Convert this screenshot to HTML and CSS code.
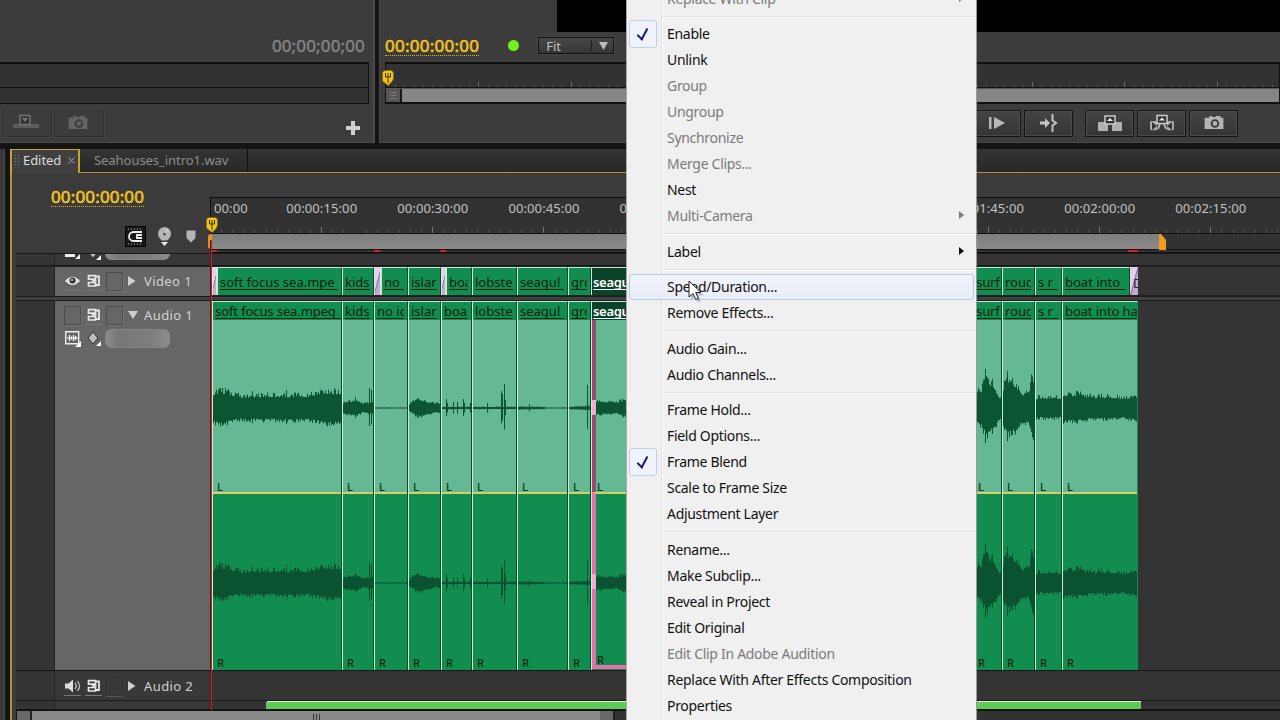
FILE: index.html
```html
<!DOCTYPE html>
<html lang="en">
<head>
<meta charset="utf-8">
<title>Edited</title>
<link rel="stylesheet" href="styles.css">
</head>
<body>
<svg class="defs">
  <symbol id="sync" viewBox="0 0 14 14"><path d="M1.500 1.700h7v3.500h-7zM1.500 8.500h7v3.500h-7z" fill="none" stroke="#e6e6e6" stroke-width="1.700"/><path d="M8.500 2.500h3.500v8.500h-3.500M5 6.900h4.500" fill="none" stroke="#e6e6e6" stroke-width="1.800"/></symbol>
  <symbol id="camera" viewBox="0 0 20 16"><path d="M0 3h5V1h3v1h4V1h5v2h3v12H0z" fill="currentColor"/><circle cx="11" cy="9" r="3.6" fill="none" stroke="#3a3a3a" stroke-width="2"/></symbol>
  <symbol id="head" viewBox="0 0 12 16"><path d="M.5 3.500Q.5.5 3.500.5h5q3 0 3 3V8Q11.500 11 6 15.500L.5 11z" fill="#f0c419" stroke="#8a6c08" stroke-width=".6"/><path d="M3.500 3v4M6 3v10M8.500 3v4M3.500 7h5" stroke="#3c3004" fill="none"/></symbol>
  <symbol id="key" viewBox="0 0 18 16"><path d="M7 1l5 6-5 6-5-6z" fill="#bbb" stroke="#333"/><path d="M15 10v5h-5z" fill="#fff"/></symbol>
</svg>
<div class="app">
  <section class="monitors">
    <div class="source">
      <div class="source-time"><span class="tc dim">00;00;00;00</span></div>
      <div class="well"></div><div class="well low"></div>
      <div class="source-tools">
        <span class="flat-btn"><svg width="26" height="16" viewBox="0 0 26 16"><path d="M0 10h26v4H0z" fill="#5c5c5c"/><rect x="7" y="1.500" width="10" height="9" fill="#333" stroke="#737373" stroke-width="1.500"/><path d="M9 4h6l-3 4z" fill="#777"/></svg></span>
        <span class="flat-btn"><svg width="20" height="15" class="cam-dim"><use href="#camera"/></svg></span>
        <svg class="plus" width="14" height="14"><path d="M5 0h4v5h5v4H9v5H5V9H0V5h5z" fill="#d0d0d0"/></svg>
      </div>
    </div>
    <div class="program">
      <div class="video"></div>
      <div class="program-time">
        <span class="tc gold">00:00:00:00</span><i class="dot"></i>
        <span class="select">Fit<b></b><svg width="9" height="8"><path d="M0 0h9L4.500 8z" fill="#bbb"/></svg></span>
      </div>
      <div class="p-ruler"><svg class="p-head" width="12" height="16"><use href="#head"/></svg></div>
      <div class="p-bar"><i></i></div>
      <div class="p-tools">
        <span class="btn"><svg width="18" height="14"><path d="M1 1h2.500v12H1zM6 1l11 6-11 6z" fill="#b8b8b8"/></svg></span>
        <span class="btn"><svg width="18" height="18"><path d="M0 7.500h5V4l5 5-5 5v-3.500H0z" fill="#c4c4c4"/><path d="M12.500 0v6.500L16 9l-3.500 2.500V18" fill="none" stroke="#c4c4c4" stroke-width="2"/></svg></span>
        <span class="btn first"><svg width="24" height="18"><path d="M0 8h10v9H0zM14 8h10v9H14z" fill="#b0b0b0"/><path d="M7 2h10v8H7z" fill="#333" stroke="#ccc" stroke-width="1.500"/><path d="M9 7h6l-3-3z" fill="#eee"/></svg></span>
        <span class="btn"><svg width="24" height="18"><path d="M.7 7.700h6v8h-6zM17.300 7.700h6v8h-6z" fill="#b0b0b0" stroke="#b0b0b0"/><path d="M2 8l5 4-5 4zM22 8l-5 4 5 4z" fill="#333"/><path d="M8 15l2-5M16 15l-2-5" stroke="#ccc" stroke-width="1.500"/><path d="M7 1.500h10v8H7z" fill="#333" stroke="#ccc" stroke-width="1.500"/><path d="M9 6.500h6l-3-3z" fill="#eee"/></svg></span>
        <span class="btn"><svg width="20" height="15" class="cam"><use href="#camera"/></svg></span>
      </div>
    </div>
  </section>
  <section class="timeline">
    <div class="rail"></div>
    <div class="panel">
      <div class="tabs">
        <div class="tab active"><i class="grip"></i>Edited<svg width="7" height="7"><path d="M.5.5l6 6M6.500.5l-6 6" stroke="#aaa"/></svg></div>
        <div class="tab">Seahouses_intro1.wav</div>
      </div>
      <div class="body">
        <div class="top">
          <div class="controls">
            <span class="tc gold">00:00:00:00</span>
            <div class="toggles">
              <span class="magnet"><svg width="19" height="19"><path d="M16 5H7.500a4.500 4.500 0 0 0 0 9H16M16 8h-5v3h5" fill="none" stroke="#eee" stroke-width="1.800"/><path d="M2 2h14M2 17h13" stroke="#bbb" stroke-dasharray="1 2"/></svg></span>
              <svg width="15" height="20"><path d="M1 6.500a6.500 6.500 0 0 1 13 0q0 4-4 7H5q-4-3-4-7z" fill="#b5b5b5"/><circle cx="7.500" cy="7" r="1.500" fill="#555"/><path d="M8 6l3-4" stroke="#eee"/><path d="M4 15h7l-3.500 4z" fill="#eee"/></svg>
              <svg width="10" height="13"><path d="M.5.500h9V8L5 12.500.500 8z" fill="#b5b5b5"/></svg>
            </div>
          </div>
          <div class="ruler">
            <div class="times" id="times"></div>
            <div class="range"><i></i><b></b><svg width="7" height="16"><path d="M0 0h2l5 6v10H0z" fill="#f29b1d"/></svg></div>
            <div class="render"><i></i><i></i><i></i><i></i></div>
            <svg class="t-head" width="12" height="16"><use href="#head"/></svg>
          </div>
        </div>
        <div class="tracks">
          <div class="track peek"><div class="gutter"></div><div class="head"><svg width="16" height="16"><path d="M0 8h10v4H0zM15 9v5h-5z" fill="#eee"/></svg><svg width="18" height="16"><use href="#key"/></svg><i class="knob"></i></div><div class="lane"></div></div>
          <div class="track video-track"><div class="gutter"></div><div class="head"><div class="row">
            <span class="cell"><svg width="15" height="10"><path d="M.5 5Q7.500-2.500 14.500 5 7.500 12 .5 5z" fill="#ddd" stroke="#eee"/><circle cx="7.500" cy="4.500" r="3" fill="#333"/><circle cx="7" cy="4" r="1" fill="#eee"/></svg></span>
            <span class="cell"><svg width="14" height="14"><use href="#sync"/></svg></span><span class="cell box"></span>
            <svg class="tri" width="8" height="10"><path d="M0 0l7.500 5L0 10z" fill="#d0d0d0"/></svg><span>Video 1</span></div></div>
            <div class="lane clips" id="video"></div></div>
          <div class="divider"></div>
          <div class="track audio-track"><div class="gutter"></div><div class="head"><div class="row">
            <span class="cell box"></span><span class="cell"><svg width="14" height="14"><use href="#sync"/></svg></span><span class="cell box"></span>
            <svg class="tri" width="10" height="8"><path d="M0 0h10L5 8z" fill="#d0d0d0"/></svg><span>Audio 1</span></div>
            <div class="row second"><svg width="16" height="16"><path d="M.7.700h13v12H.7z" fill="none" stroke="#eee" stroke-width="1.400"/><path d="M2 7h11M4.500 4v6M6.500 5.500v3M8.500 4v6M10.500 5v4" stroke="#fff" stroke-width="1.200"/><path d="M16 10v6h-6z" fill="#fff"/></svg><svg width="18" height="16"><use href="#key"/></svg><i class="knob"></i></div></div>
            <div class="lane clips" id="audio"></div></div>
          <div class="track small"><div class="gutter"></div><div class="head"><div class="row">
            <span class="cell"><svg width="16" height="14"><path d="M0 4.500h3.500L8 .5v13L3.500 9.500H0z" fill="#ddd"/><path d="M10 4q2.500 3 0 6M12.500 2q4 5 0 10" fill="none" stroke="#ccc" stroke-width="1.200"/></svg></span>
            <span class="cell"><svg width="14" height="14"><use href="#sync"/></svg></span><span class="cell box"></span>
            <svg class="tri" width="8" height="10"><path d="M0 0l7.500 5L0 10z" fill="#d0d0d0"/></svg><span>Audio 2</span></div></div><div class="lane"></div></div>
          <div class="track last"><div class="gutter"></div><div class="head"></div><div class="lane"><i class="green"></i></div></div>
          <div class="playline"></div>
        </div>
        <div class="scroll"><i class="cap"></i><i class="thumb"></i><i class="cap"></i></div>
      </div>
    </div>
  </section>

  <nav class="menu">
    <div class="item off">Replace With Clip<i class="arrow"></i></div><hr>
    <div class="item checked">Enable</div>
    <div class="item">Unlink</div>
    <div class="item off">Group</div>
    <div class="item off">Ungroup</div>
    <div class="item off">Synchronize</div>
    <div class="item off">Merge Clips...</div>
    <div class="item">Nest</div>
    <div class="item off">Multi-Camera<i class="arrow"></i></div><hr>
    <div class="item">Label<i class="arrow"></i></div><hr>
    <div class="item hover">Speed/Duration...</div>
    <div class="item">Remove Effects...</div><hr>
    <div class="item">Audio Gain...</div>
    <div class="item">Audio Channels...</div><hr>
    <div class="item">Frame Hold...</div>
    <div class="item">Field Options...</div>
    <div class="item checked">Frame Blend</div>
    <div class="item">Scale to Frame Size</div>
    <div class="item">Adjustment Layer</div><hr>
    <div class="item">Rename...</div>
    <div class="item">Make Subclip...</div>
    <div class="item">Reveal in Project</div>
    <div class="item">Edit Original</div>
    <div class="item off">Edit Clip In Adobe Audition</div>
    <div class="item">Replace With After Effects Composition</div>
    <div class="item">Properties</div>
  </nav>
  <svg class="cursor" width="20" height="24"><path d="M3 3v17l4-3.500 3 6 3-1.500-2.500-5.500h5.500z" fill="#0003"/><path d="M1 1v16l4-3.500 2.700 6 2.600-1.200-2.600-5.800H13z" fill="#fff" stroke="#222"/></svg>
</div>
<script src="main.js"></script>
</body>
</html>
```
FILE: styles.css
```css
* { box-sizing: border-box; }
body { margin: 0; background: #111; overflow: hidden; font-family: "Noto Sans", sans-serif; }
.defs { position: absolute; width: 0; height: 0; }
.app { position: relative; width: 1280px; height: 720px; overflow: hidden; display: flex; flex-direction: column; background: #141414; }
svg { display: block; flex: none; }

.monitors { display: flex; gap: 4px; height: 143px; flex: none; }
.source { width: 375px; background: #3c3c3c; border-right: 2px solid #4a4a4a; border-bottom: 1px solid #4a4a4a; display: flex; flex-direction: column; }
.source-time { height: 62px; padding: 33px 8px 0 0; display: flex; justify-content: flex-end; }
.tc { font-size: 17px; line-height: 26px; height: 23px; letter-spacing: 0.15px; white-space: nowrap; -webkit-text-stroke: 0.6px; }
.tc.dim { color: #858585; -webkit-text-stroke: 0.4px; }
.tc.gold { color: #f2c321; border-bottom: 1px dotted #d9ae24; }
.well { width: 369px; height: 26px; background: #323232; border: 1px solid #111; border-left: 0; border-top-width: 2px; }
.well.low { height: 16px; border-top: 0; }
.source-tools { display: flex; padding-top: 6px; height: 38px; }
.flat-btn { width: 50px; height: 27px; margin-left: 2px; border: 1px solid #303030; outline: 1px solid #434343; display: flex; align-items: center; justify-content: center; }
.flat-btn svg { margin: 0 2px 3px 0; }
.cam-dim { color: #646464; }
.plus { margin: 11px 0 0 242px; }

.program { flex: 1; background: #3c3c3c; border-left: 1px solid #4a4a4a; border-bottom: 1px solid #4a4a4a; }
.video { height: 32px; margin-left: 177px; background: #000; }
.program-time { height: 30px; padding: 1px 0 0 5px; display: flex; }
.program-time .tc { letter-spacing: 0.25px; }
.dot { width: 11px; height: 11px; border-radius: 50%; background: #70f01c; margin: 7px 0 0 29px; }
.select { display: flex; align-items: center; width: 76px; height: 17px; margin: 4px 0 0 19px; border: 1px solid #111; background: linear-gradient(#484848, #363636); color: #c0c0c0; font-size: 13px; padding-left: 7px; outline: 1px solid #444; }
.select b { width: 1px; height: 11px; background: #222; margin: 0 7px 0 30px; }
.p-ruler { position: relative; height: 26px; margin-left: 5px; background: repeating-linear-gradient(90deg, transparent 0 91.300px, #6b6b6b 91.300px 92.300px) 1px 18px / 100% 7px no-repeat, repeating-linear-gradient(90deg, transparent 0 8.230px, #595959 8.230px 9.230px) 1px 21px / 100% 3px no-repeat, #323232; border: 1px solid #111; border-top-width: 2px; }
.p-head { position: absolute; left: -4px; top: 6px; }
.p-bar { height: 16px; margin-left: 5px; border: 1px solid #111; border-top: 1px solid #555; border-bottom-width: 2px; background: #868686; }
.p-bar i { display: block; width: 16px; height: 13px; border-right: 2px solid #181818; background: repeating-linear-gradient(#777 0 1px, transparent 1px 3px) 4px 3px / 7px 8px no-repeat, #555; }
.p-tools { display: flex; gap: 3px; padding: 6px 0 0 592px; }
.btn { width: 49px; height: 27px; border: 1px solid #151515; background: linear-gradient(#454545, #343434); box-shadow: inset 0 0 0 1px #4b4b4b; display: flex; align-items: center; justify-content: center; }
.btn svg { margin-bottom: 2px; }
.btn.first { margin-left: 9px; }
.cam { color: #b4b4b4; }

.timeline { flex: 1; display: flex; padding-top: 6px; }
.rail { width: 5px; background: #393939; border-right: 1px solid #4a4a4a; }
.panel { width: 1270px; margin-left: 5px; display: flex; flex-direction: column; }
.tabs { height: 24px; display: flex; background: linear-gradient(#343434, #282828); border-bottom: 1px solid #c08c3a; font-size: 13px; line-height: 22px; }
.tab { width: 168px; padding-left: 14px; color: #8d8d8d; border-right: 1px solid #111; letter-spacing: -0.05px; white-space: nowrap; }
.tab.active { width: 70px; height: 24px; border: 2px solid #c9a22c; border-bottom: 0; border-top-width: 1px; color: #dcdcdc; background: #404040; display: flex; align-items: center; padding: 0 0 3px 2px; }
.grip { width: 5px; height: 12px; margin-right: 4px; background: radial-gradient(circle, #888 0.8px, transparent 1px) 0 0 / 3px 3px; }
.tab svg { margin: 0 0 0 7px; }
.body { flex: 1; border-left: 2px solid #b8942b; background: #3b3b3b; display: flex; flex-direction: column; }
.top { display: flex; height: 80px; flex: none; }
.controls { width: 198px; flex: none; padding: 11px 0 0 39px; display: flex; flex-direction: column; align-items: flex-start; }
.toggles { display: flex; padding: 19px 0 0 74px; align-items: center; }
.magnet { border: 1px solid #000; background: #181818; margin: 0 11px 0 0; }
.toggles > svg + svg { margin-left: 14px; }
.ruler { position: relative; flex: 1; min-width: 0; margin-top: 24px; border-top: 1px solid #0c0c0c; border-left: 1px solid #0c0c0c; background: #323232; }
.times { height: 36px; overflow: hidden; display: flex; font-size: 13px; line-height: 20px; color: #c2c2c2; background: repeating-linear-gradient(90deg, transparent 0 110.150px, #777 110.150px 111.150px) 0 29px / 100% 7px no-repeat, repeating-linear-gradient(90deg, transparent 0 10.120px, #585858 10.120px 11.115px) 0 32px / 100% 4px no-repeat; border-bottom: 1px solid #111; }
.times span { width: 111.150px; flex: none; text-align: center; white-space: nowrap; letter-spacing: 0.1px; }
.times span:first-child { width: 55.100px; text-align: left; padding-left: 3px; }
.range { display: flex; height: 16px; border-bottom: 1px solid #111; }
.range i { width: 4px; margin-left: -3px; background: #f08a25; border-radius: 3px 0 0 3px; }
.range b { width: 947px; background: linear-gradient(#7d7d7d, #8b8b8b); }
.render { height: 3px; display: flex; border-bottom: 1px solid #111; }
.render i { width: 6px; height: 2px; background: #d02030; }
.render i:nth-child(2) { margin-left: 157px; }
.render i:nth-child(3) { margin-left: 60px; }
.render i:nth-child(4) { margin-left: 682px; width: 10px; }
.t-head { position: absolute; left: -5px; top: 19px; }

.tracks { position: relative; margin-left: 4px; flex: none; height: 457px; border-top: 1px solid #191919; background: #343434; }
.track { display: flex; }
.gutter { width: 39px; border-right: 1px solid #222; background: #343434; flex: none; }
.head { width: 156px; background: #666; flex: none; color: #d2d2d2; font-size: 13px; overflow: hidden; }
.lane { flex: 1; min-width: 0; background: #343434; overflow: hidden; }
.peek { height: 12px; border-bottom: 1px solid #191919; }
.peek .head { background: #383838; display: flex; align-items: flex-start; padding-left: 10px; }
.peek .head svg { margin-top: -9px; margin-right: 5px; }
.knob { flex: none; width: 65px; height: 19px; border-radius: 6px; border: 1px solid #858585; background: linear-gradient(90deg, #8c8c8c, #777 20%, #7d7d7d 70%, #8c8c8c); }
.peek .knob { margin: -13px 0 0 -4px; }
.video-track { height: 30px; border-top: 1px solid #222; }
.video-track .lane { border-bottom: 1px solid #222; }
.row { display: flex; align-items: center; height: 28px; padding-left: 9px; }
.cell { width: 17px; height: 19px; margin-right: 4px; display: flex; align-items: center; justify-content: center; border-bottom: 1px solid #777; flex: none; }
.box { border: 1px solid #4c4c4c; box-shadow: 1px 1px #747474; }
.tri { margin: 0 6px 0 1px; width: 10px; }
.row > span:last-child { letter-spacing: 0.4px; white-space: nowrap; padding-left: 0; }
.divider { height: 5px; border-top: 1px solid #1c1c1c; border-bottom: 1px solid #1c1c1c; background: #404040; }
.audio-track { height: 370px; border-bottom: 1px solid #151515; }
.audio-track .second { height: 19px; gap: 5px; padding-left: 10px; }
.second .knob { margin-left: -4px; }
.small { height: 30px; border-bottom: 1px solid #1b1b1b; }
.small .row { height: 30px; }
.small .head, .last .head { background: #383838; }
.small .box { border-color: #333; box-shadow: 0 1px #555; }
.last { height: 9px; border-bottom: 1px solid #151515; }
.green { display: block; margin-left: 55px; width: 875px; height: 9px; background: #5fca57; border-top: 1px solid #e7f7df; border-radius: 3px 0 0 0; }
.playline { position: absolute; left: 195px; top: -14px; bottom: 0; width: 1px; background: #c02828; box-shadow: -1px 0 #4a1c1c; }
.scroll { display: flex; margin-left: 4px; flex: 1; border-top: 1px solid #111; border-left: 1px solid #111; background: #323232; }
.cap { width: 15px; border-right: 2px solid #222; background: #696969; }
.thumb { width: 568px; background: repeating-linear-gradient(90deg, #333 0 1px, transparent 1px 3px) 281px 3px / 7px 7px no-repeat, #898989; }

.clips { display: flex; padding-left: 1px; }
.clip { flex: none; overflow: hidden; white-space: pre; font-size: 13px; color: #04220f; background: #118d50; border-left: 1px solid #c9ecd5; border-right: 1px solid #0a4b2b; border-top: 1px solid #c5ead6; display: flex; flex-direction: column; letter-spacing: 0; }
.clip .name { margin: 0 3px 0 2px; overflow: hidden; flex: none; border-bottom: 1px solid #04220f; }
.clip.wide .name { margin-right: 0; letter-spacing: -0.1px; }
.video-track .name { margin-top: 7px; height: 15px; line-height: 15px; }
.audio-track .name { height: 17px; line-height: 18px; }
.sel { font-weight: 600; letter-spacing: -0.3px; }
.sel .name { color: #fff; border-color: #fff; margin-left: 1px; }
.video-track .sel, .sel .strip { background: #0b4329; }
.fade { flex: none; border: 1px solid #e6e0ea; border-width: 1px 1px 0; background: linear-gradient(105deg, #e2d0e8 45%, #8d69a4 50%, #c6aace 60%); font-size: 13px; line-height: 30px; overflow: hidden; color: #302038; }
.fade.named { padding-left: 3px; border-width: 1px 0 0; }
.strip { height: 18px; background: #118d50; flex: none; }
.chan { position: relative; flex: none; display: flex; align-items: flex-end; font-size: 11px; line-height: 10px; padding-left: 4px; font-weight: 500; color: #04361b; }
.chan svg { position: absolute; left: 0; top: 0; }
.left { height: 172px; background: #64b894; }
.right { height: 177px; color: #03260f; border-top: 2px solid #d9cf62; padding-bottom: 1px; }
.sel .chan { border-left: 4px solid #e66fa9; padding-left: 1px; }
.sel .left { border-left-color: #984a72; }
.sel .right { border-bottom: 4px solid #e66fa9; padding-bottom: 0; }
.sel .chan::before { content: ""; position: absolute; left: -4px; top: 80px; width: 4px; height: 15px; background: #f3abcf; }
.clip.end { border-right-color: #118d50; }

.menu { position: absolute; left: 626px; top: -14.500px; width: 351px; height: 750px; background: linear-gradient(90deg, transparent 34px, #e0e1e2 34px 35px, #fff 35px 36px, transparent 36px), #f0f0f0; border-left: 1px solid #aaa; border-right: 1px solid #999; font-family: "Noto Sans", sans-serif; font-size: 14px; color: #111; }
.item { position: relative; height: 26px; line-height: 26px; padding-left: 37px; margin: 0 2px; letter-spacing: -0.3px; white-space: nowrap; border: 1px solid transparent; border-width: 0 1px; }
.item.off { color: #7b7b7b; }
.menu hr { height: 2px; margin: 4px 0 3.500px 36px; border: 0; background: linear-gradient(#dedfe0 50%, #fff 50%); }
.hover { background: linear-gradient(#f2f4fa, #e8edf8); border: 1px solid #b5c8e8; border-radius: 3px; line-height: 24px; }
.arrow { position: absolute; right: 9px; top: 8px; border-left: 5px solid currentColor; border-top: 4.500px solid transparent; border-bottom: 4.500px solid transparent; }
.checked::before { content: ""; position: absolute; left: -1px; top: -1px; width: 26px; height: 26px; border: 1px solid #c0cfee; border-radius: 3px; background: #f0f3fb; }
.checked::after { content: ""; position: absolute; left: 9px; top: 5px; width: 5px; height: 11px; border: solid #17137c; border-width: 0 2.500px 2.500px 0; transform: rotate(28deg) skewY(16deg); }
.cursor { position: absolute; left: 688px; top: 280px; }
```
FILE: main.js
```js
const times = ["00:00","00:00:15:00","00:00:30:00","00:00:45:00","00:01:00:00","","","00:01:45:00","00:02:00:00","00:02:15:00"];
document.getElementById("times").innerHTML = times.map(t => `<span>${t}</span>`).join("");

// Video lane: [width, name, kind]
const video = [[5,"","fade"],[125,"soft focus sea.mpe"],[32,"kids"],[7,"","fade"],[27,"no "],[33,"islar"],[5,"","fade"],[26,"boa"],
  [45,"lobste"],[51,"seagul  "],[23,"gro"],[382,"seagu","sel"],[29,"surf","wide"],[33,"rouc"],[27,"s r   "],[68,"boat into  "],[8,"D","fade"]];
document.getElementById("video").innerHTML = video.map(([w, name, kind]) => kind === "fade"
  ? `<div class="fade ${name ? "named" : ""}" style="width:${w}px">${name}</div>`
  : `<div class="clip ${kind || ""}" style="width:${w}px"><div class="name">${name}</div></div>`).join("");

// Audio lane: [width, name, envelope as x/level pairs, spikes as x/level pairs, kind]
const audio = [
  [130,"soft focus sea.mpeg",[0,13,8,15,16,13,28,10,45,11,70,11,95,11,112,14,130,14],[9,20,39,17,73,18],"wide"],
  [32,"kids",[0,5,12,7,20,4,32,6],[12,11,26,20,28,18]],
  [34,"no ic",[0,.5,34,.5],[]],
  [33,"islar",[0,3,8,8,20,5,33,3.5],[]],
  [31,"boa",[0,1,31,1],[4,9,5,5,11,6,15,6,21,9,22,5,28,5]],
  [45,"lobste",[0,1,45,1],[14,5,28,17,29,14,31,24,32,8]],
  [51,"seagul  ",[0,1.3,26,1,27,.5,51,.5],[11,4]],
  [23,"gro",[0,1,23,2],[18,23,21,7]],
  [382,"seagu",[0,6,20,5,30,8,382,8],[],"sel"],
  [29,"surf",[0,12,7,16,12,26,20,18,25,10,29,10],[11,39,18,29],"wide"],
  [33,"roug",[0,18,5,24,12,20,20,12,25,14,28,24,33,25],[4,37,9,30,13,24]],
  [27,"s r   ",[0,9,27,9],[2,13]],
  [76,"boat into ha",[0,12,15,12,30,10,50,10,60,9,76,11],[14,17,44,14],"wide"]
];

function wave(width, env, spikes, mid, color) {
  let d = "", seed = width * 7;
  const rnd = () => (seed = (seed * 16807 + 11) % 2147483647) / 2147483647;
  for (let x = 0; x < width; x++) {
    let i = 0;
    while (i < env.length - 4 && env[i + 2] <= x) i += 2;
    const level = env[i + 1] + (env[i + 3] - env[i + 1]) * Math.min(1, (x - env[i]) / (env[i + 2] - env[i]));
    let up = level * (0.98 + 0.45 * rnd() ** 2), down = level * (0.98 + 0.35 * rnd() ** 2);
    const s = spikes.findIndex((v, k) => k % 2 === 0 && v === x);
    if (s >= 0) { up = spikes[s + 1]; down = up * 0.9; }
    d += `M${x} ${(mid - up).toFixed(1)}h1V${(mid + down).toFixed(1)}h-1z`;
  }
  return `<svg width="${width}" height="160"><path d="${d}" fill="${color}"/></svg>`;
}

document.getElementById("audio").innerHTML = audio.map(([w, name, env, spikes, kind], n) =>
  `<div class="clip ${kind || ""} ${n === audio.length - 1 ? "end" : ""}" style="width:${w}px"><div class="strip"><div class="name">${name}</div></div>
  <div class="chan left">${wave(w, env, spikes, 88, "#0b5533")}L</div><div class="chan right">${wave(w, env, spikes, 89, "#0b5330")}R</div></div>`.replace(/>\s+</g, "><")).join("");
```
